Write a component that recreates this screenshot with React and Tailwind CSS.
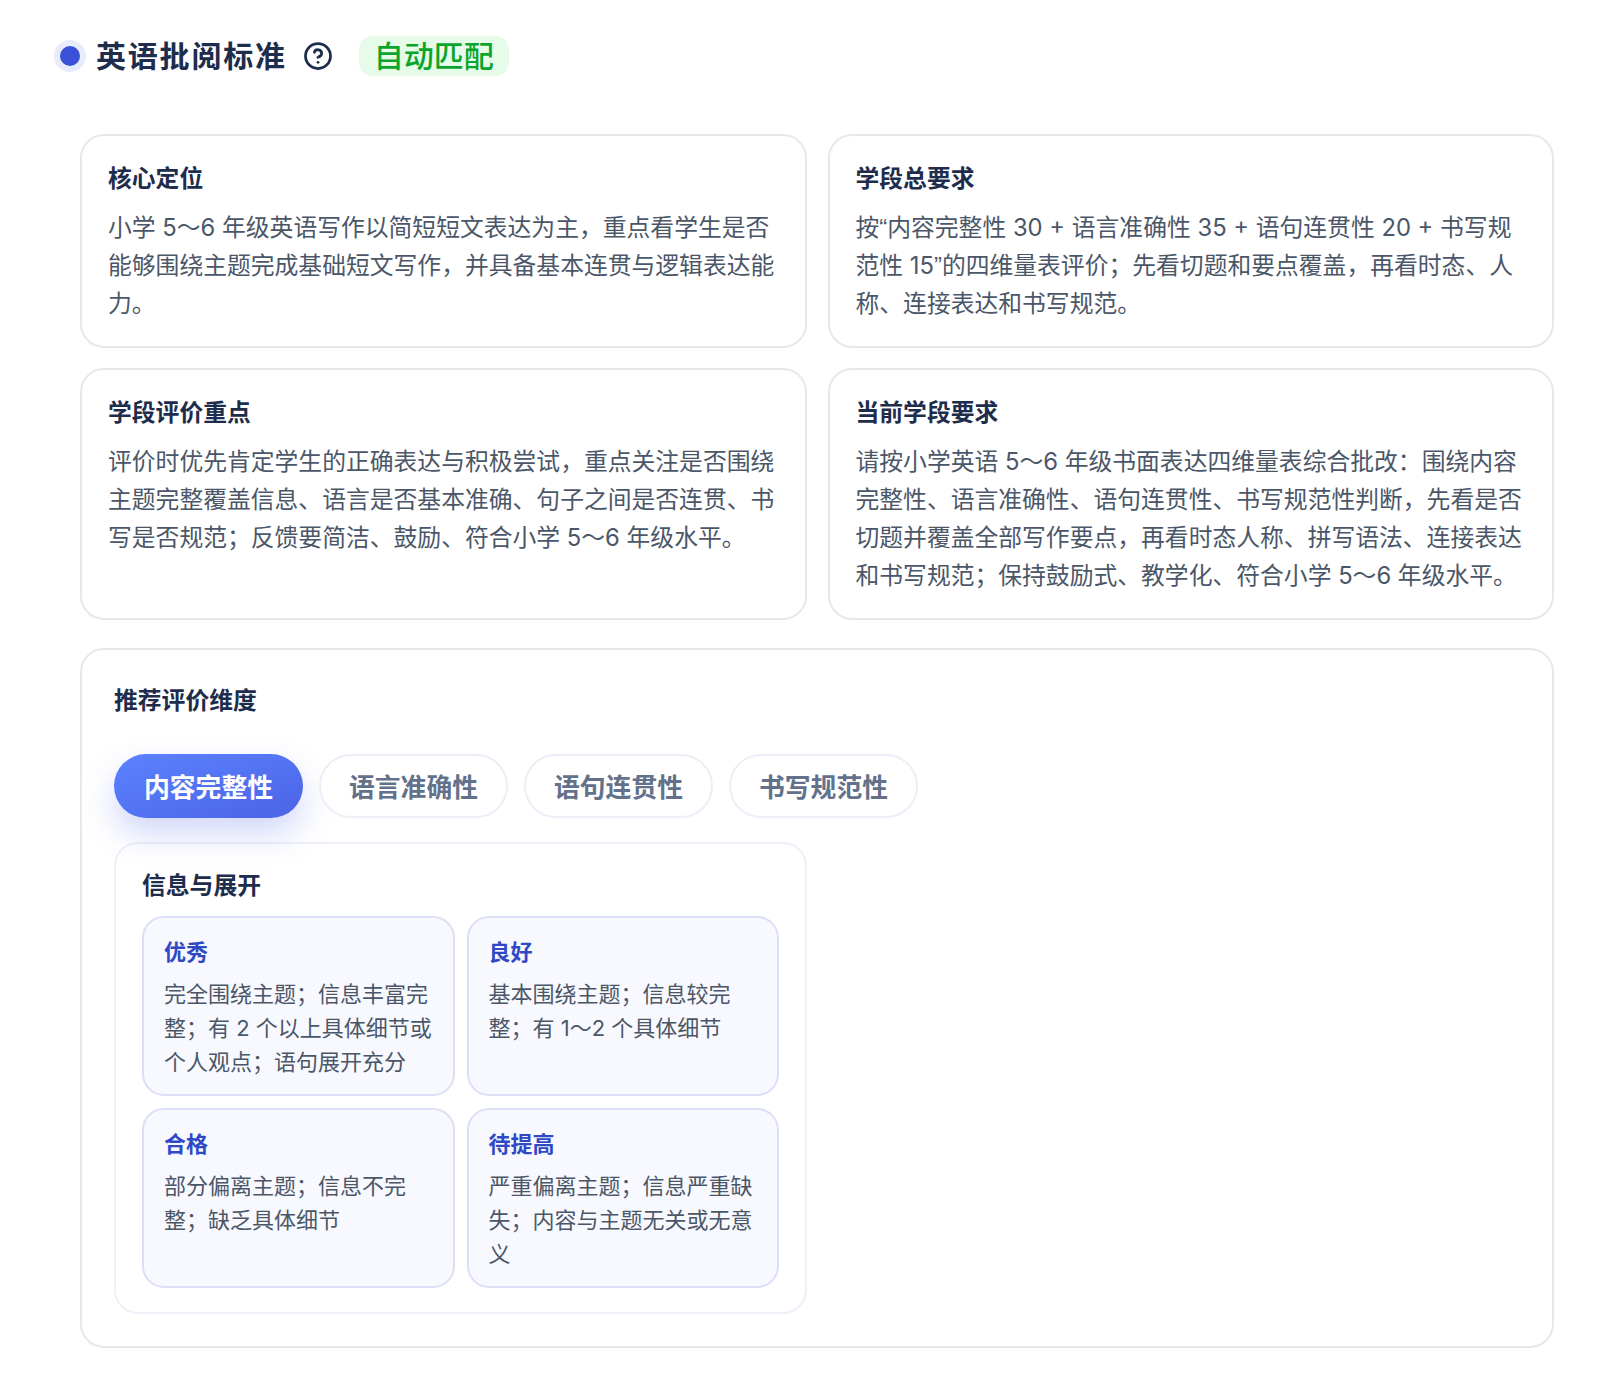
import React from "react";
import { CircleHelp } from "lucide-react";

const quote = "font-['Liberation_Sans']";

const summaryCards = [
  {
    title: "核心定位",
    text: "小学 5～6 年级英语写作以简短短文表达为主，重点看学生是否能够围绕主题完成基础短文写作，并具备基本连贯与逻辑表达能力。",
  },
  {
    title: "学段总要求",
    text: (
      <>
        按<span className={quote}>“</span>内容完整性 30 + 语言准确性 35 + 语句连贯性 20 + 书写规范性 15
        <span className={quote}>”</span>的四维量表评价；先看切题和要点覆盖，再看时态、人称、连接表达和书写规范。
      </>
    ),
  },
  {
    title: "学段评价重点",
    text: "评价时优先肯定学生的正确表达与积极尝试，重点关注是否围绕主题完整覆盖信息、语言是否基本准确、句子之间是否连贯、书写是否规范；反馈要简洁、鼓励、符合小学 5～6 年级水平。",
  },
  {
    title: "当前学段要求",
    text: "请按小学英语 5～6 年级书面表达四维量表综合批改：围绕内容完整性、语言准确性、语句连贯性、书写规范性判断，先看是否切题并覆盖全部写作要点，再看时态人称、拼写语法、连接表达和书写规范；保持鼓励式、教学化、符合小学 5～6 年级水平。",
  },
];

const tabs = ["内容完整性", "语言准确性", "语句连贯性", "书写规范性"];

const levels = [
  { name: "优秀", text: "完全围绕主题；信息丰富完整；有 2 个以上具体细节或个人观点；语句展开充分" },
  { name: "良好", text: "基本围绕主题；信息较完整；有 1～2 个具体细节" },
  { name: "合格", text: "部分偏离主题；信息不完整；缺乏具体细节" },
  { name: "待提高", text: "严重偏离主题；信息严重缺失；内容与主题无关或无意义" },
];

export default function App() {
  return (
    <div className="min-h-[1400px] bg-white pt-[36px] pl-[54px] pr-[68px] font-['Inter','Noto_Sans_CJK_SC',sans-serif]">
      {/* HEADER */}
      <div className="flex items-center h-[40px]">
        <span className="w-[32px] h-[32px] rounded-full bg-[#e8ebfb] flex items-center justify-center">
          <span className="w-[20px] h-[20px] rounded-full bg-[#3a50d6]" />
        </span>
        <h1 className="ml-[10px] text-[30px] font-bold leading-[40px] tracking-[1.8px] text-[#1e2d4b]">
          英语批阅标准
        </h1>
        <CircleHelp size={30} strokeWidth={2.2} className="ml-[16px] text-[#1e2d4b]" />
        <span className="ml-[26px] h-[40px] px-[15px] rounded-[14px] bg-[#e6fbe8] text-[#0aa52c] text-[30px] font-medium leading-[40px]">
          自动匹配
        </span>
      </div>

      <div className="ml-[26px] mt-[58px]">
        {/* SUMMARY */}
        <div className="grid grid-cols-2 gap-x-[21px] gap-y-[20px]">
          {summaryCards.map((c) => (
            <div key={c.title} className="border-2 border-[#e6e8ec] rounded-[24px] pl-[26px] pr-[24px] pt-[26px] pb-[23px]">
              <h3 className="text-[23.8px] font-bold leading-[34px] text-[#1e2d4b]">{c.title}</h3>
              <p className="mt-[13px] text-[23.8px] leading-[38px] text-[#4b5768]">{c.text}</p>
            </div>
          ))}
        </div>

        {/* DIMENSIONS */}
        <div className="mt-[28px] border-2 border-[#e6e8ec] rounded-[24px] px-[32px] pt-[34px] pb-[32px]">
          <h3 className="text-[23.8px] font-bold leading-[34px] text-[#1e2d4b]">推荐评价维度</h3>

          <div className="mt-[36px] flex gap-[16px]">
            {tabs.map((t, i) => (
              <button
                key={t}
                className={
                  i === 0
                    ? "w-[189px] h-[64px] pt-[4px] rounded-full bg-gradient-to-br from-[#5c82ff] to-[#4a64e6] text-white text-[25.8px] font-bold shadow-[0_16px_32px_rgba(74,100,230,0.25)]"
                    : "w-[189px] h-[64px] pt-[4px] rounded-full border-2 border-[#eceff8] bg-white text-[#64718a] text-[25.8px] font-bold"
                }
              >
                {t}
              </button>
            ))}
          </div>

          <div className="mt-[24px] w-[693px] border-2 border-[#eef0f9] rounded-[24px] px-[26px] pt-[25px] pb-[24px]">
            <h4 className="text-[23.8px] font-bold leading-[34px] text-[#1e2d4b]">信息与展开</h4>
            <div className="mt-[13px] grid grid-cols-2 gap-x-[12px] gap-y-[12px]">
              {levels.map((l) => (
                <div key={l.name} className="h-[180px] border-2 border-[#dcdff5] bg-[#f8f9fe] rounded-[22px] px-[20px] pt-[17px]">
                  <div className="text-[22px] font-bold leading-[34px] text-[#2f49c6]">{l.name}</div>
                  <p className="mt-[8px] text-[22px] leading-[34px] text-[#4b5768]">{l.text}</p>
                </div>
              ))}
            </div>
          </div>
        </div>
      </div>
    </div>
  );
}
